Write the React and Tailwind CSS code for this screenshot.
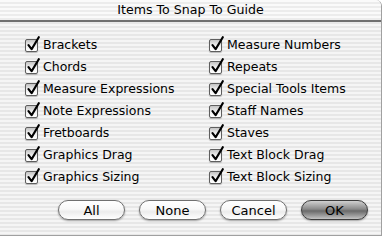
import React from "react";

const left = [
  "Brackets",
  "Chords",
  "Measure Expressions",
  "Note Expressions",
  "Fretboards",
  "Graphics Drag",
  "Graphics Sizing",
];
const right = [
  "Measure Numbers",
  "Repeats",
  "Special Tools Items",
  "Staff Names",
  "Staves",
  "Text Block Drag",
  "Text Block Sizing",
];

function Check({ label }) {
  return (
    <div className="h-[22px] flex items-center">
      <span className="relative w-[13px] h-[13px] mt-[1px] rounded-[2px] border border-[#5e5e5e] bg-gradient-to-b from-[#c4c4c4] via-[#f0f0f0] to-[#ffffff] shadow-[0_1px_1px_rgba(0,0,0,0.25)] shrink-0">
        <svg
          className="absolute left-[0px] top-[-5px]"
          width="16"
          height="17"
          viewBox="0 0 16 17"
        >
          <path
            d="M2.5 10.2 L5.6 14.2 L12.8 2.2"
            fill="none"
            stroke="#000"
            strokeWidth="2.2"
            strokeLinecap="round"
            strokeLinejoin="round"
          />
        </svg>
      </span>
      <span className="ml-[5px] text-[12.5px] text-black leading-none">{label}</span>
    </div>
  );
}

function Btn({ label, def }) {
  return (
    <div
      className={
        "w-[67px] h-[20px] rounded-full flex items-center justify-center text-[13px] text-black leading-none shadow-[0_1px_2px_rgba(0,0,0,0.35)] " +
        (def
          ? "border border-[#3c3c3c] bg-[linear-gradient(to_bottom,#d0d0d0_0%,#8a8a8a_45%,#6a6a6a_55%,#9a9a9a_80%,#c4c4c4_100%)]"
          : "border border-[#707070] bg-[linear-gradient(to_bottom,#ffffff_0%,#f8f8f8_45%,#ececec_60%,#ffffff_100%)]")
      }
    >
      {label}
    </div>
  );
}

export default function App() {
  return (
    <div
      className="w-[382px] h-[236px] overflow-hidden bg-[repeating-linear-gradient(to_bottom,#f5f5f5_0px,#f5f5f5_2px,#e7e7e7_2px,#e7e7e7_4px)] rounded-tr-[6px] border-r border-b border-[#a0a0a0] flex flex-col"
      style={{ fontFamily: '"DejaVu Sans", Verdana, sans-serif' }}
    >
      <div className="h-[22px] shrink-0 border-b-2 border-[#6f6f6f] bg-[repeating-linear-gradient(to_bottom,#fafafa_0px,#fafafa_2px,#ececec_2px,#ececec_4px)] flex items-center justify-center">
        <span className="text-[12.6px] text-black leading-none">Items To Snap To Guide</span>
      </div>
      <div className="grid grid-cols-[184px_1fr] pl-[25px] pt-[12px]">
        <div className="flex flex-col">
          {left.map((l) => (
            <Check key={l} label={l} />
          ))}
        </div>
        <div className="flex flex-col">
          {right.map((l) => (
            <Check key={l} label={l} />
          ))}
        </div>
      </div>
      <div className="flex pl-[58px] mt-[12px] gap-[14px]">
        <Btn label="All" />
        <Btn label="None" />
        <Btn label="Cancel" />
        <Btn label="OK" def />
      </div>
    </div>
  );
}
